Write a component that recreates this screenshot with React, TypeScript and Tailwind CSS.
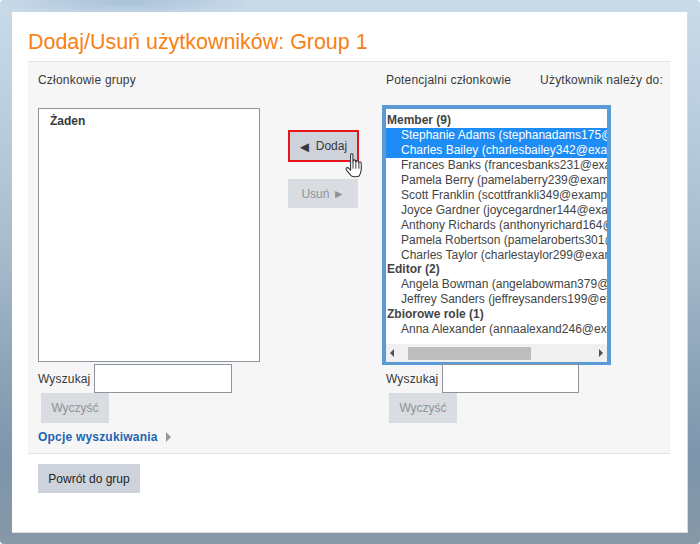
const members = [
  { label: "Member (9)", group: true },
  { label: "Stephanie Adams (stephanadams175@example.com)", selected: true },
  { label: "Charles Bailey (charlesbailey342@example.com)", selected: true },
  { label: "Frances Banks (francesbanks231@example.com)" },
  { label: "Pamela Berry (pamelaberry239@example.com)" },
  { label: "Scott Franklin (scottfrankli349@example.com)" },
  { label: "Joyce Gardner (joycegardner144@example.com)" },
  { label: "Anthony Richards (anthonyrichard164@example.com)" },
  { label: "Pamela Robertson (pamelaroberts301@example.com)" },
  { label: "Charles Taylor (charlestaylor299@example.com)" },
  { label: "Editor (2)", group: true },
  { label: "Angela Bowman (angelabowman379@example.com)" },
  { label: "Jeffrey Sanders (jeffreysanders199@example.com)" },
  { label: "Zbiorowe role (1)", group: true },
  { label: "Anna Alexander (annaalexand246@example.com)" },
];

function SearchBox({ width }: { width: string }) {
  return (
    <div>
      <div className="flex items-center h-[29px]">
        <span className="w-[56px] text-[12px] tracking-[0.15px] text-[#373a3c] pt-[1px]">Wyszukaj</span>
        <input type="text" className={`${width} h-[29px] bg-white border border-[#8f959e] outline-none`} />
      </div>
      <button className="block ml-[3px] w-[68px] h-[30px] bg-[#d9dce1] text-[12px] text-[#8f9296]">Wyczyść</button>
    </div>
  );
}

function Hand() {
  return (
    <svg width="19" height="25" viewBox="0.4 0.2 16.6 23.6" className="absolute left-[57px] top-[91px]">
      <path
        d="M5 1.8c0-1.1 2.2-1.1 2.2 0V9l.4-1.6c.3-1 2-1 2.1.2l.1 1.5.5-1.1c.4-.9 2-.7 2.1.4l.1 1.4.5-.7c.5-.7 1.9-.4 2 .6.2 2.500.4 5.500-.4 8.500-.4 1.500-.9 2.600-1.500 3.600-1 1.200-6.200 1.200-7.400 0L1.500 16.800c-1-1.300-.9-2.100-.4-2.500.7-.5 1.800-.1 2.500.7L5 16.500V1.800z"
        fill="#fff"
        stroke="#30343a"
        strokeWidth="1"
        strokeLinejoin="round"
      />
      <path d="M7.300 9v6M10 9.500v5.500M12.900 10v5" stroke="#30343a" strokeWidth="0.9" fill="none" />
    </svg>
  );
}

export default function App() {
  return (
    <div className="w-[700px] h-[544px] overflow-hidden bg-white font-['Liberation_Sans',Arial,sans-serif]">
      <div className="w-full h-full rounded-[4px] pt-[12px] pl-[12px] bg-[radial-gradient(ellipse_130px_14px_at_125px_2px,#a9c1d9,transparent),linear-gradient(180deg,#c9dae8_0%,#bccfdf_20%,#a9bccc_45%,#8aa1b6_70%,#7d95ab_85%,#8798a6_100%)]">
        <div className="w-[676px] h-[521px] bg-white border-r border-b border-[#dcdcdc] px-[16px]">
          <h1 className="h-[50px] pt-[18px] text-[21.45px] leading-[24px] text-[#f98012] border-b border-[#e3e3e3]">
            Dodaj/Usuń użytkowników: Group 1
          </h1>

          <div className="relative h-[392px] w-[642px] bg-[#f6f6f6] border-b border-[#e3e3e3] flex pl-[10px] overflow-hidden">
            <div className="w-[222px] pt-[9px]">
              <div className="text-[12px] leading-[18px] text-[#373a3c] tracking-[0.2px]">Członkowie grupy</div>
              <div className="mt-[19px] h-[254px] bg-white border border-[#8f959e] pl-[11px] pt-[5px] text-[12px] leading-[15px] font-bold text-[#373a3c]">
                Żaden
              </div>
              <div className="mt-[2px]">
                <SearchBox width="w-[138px]" />
              </div>
              <div className="mt-[6px] flex items-center gap-[8px] text-[12px] leading-[16px] font-bold text-[#1e64b4] tracking-[0.2px] whitespace-nowrap">
                Opcje wyszukiwania
                <span className="w-0 h-0 border-y-[5px] border-y-transparent border-l-[5px] border-l-[#999]" />
              </div>
            </div>

            <div className="relative w-[71px] ml-[28px] pt-[68px] shrink-0">
              <button className="flex items-center justify-center gap-[4px] pr-[3px] w-[71px] h-[32px] bg-[#ced3db] border-2 border-[#e8141c] text-[12px] text-[#373a3c]">
                <span className="text-[15px] leading-none">◄</span>
                <span>Dodaj</span>
              </button>
              <button className="block mt-[17px] w-[70px] h-[29px] bg-[#d9dce1] text-[12px] text-[#8f9296]">
                Usuń ►
              </button>
              <Hand />
            </div>

            <div className="ml-[23px] w-[281px] shrink-0 pt-[9px]">
              <div className="pl-[4px] flex text-[12px] leading-[18px] text-[#373a3c] tracking-[0.2px] whitespace-nowrap">
                <span className="w-[155px]">Potencjalni członkowie</span>
                <span>Użytkownik należy do:</span>
              </div>
              <div className="mt-[16px] w-[229px] h-[260px] border-4 border-b-[3px] border-[#5b9bd5] bg-white flex flex-col overflow-hidden">
                <div className="flex-1 overflow-hidden pt-[4px] text-[12px] leading-[14.9px] text-[#444]">
                  {members.map((m) =>
                    m.group ? (
                      <div key={m.label} className="pl-[1px] font-bold whitespace-nowrap">
                        {m.label}
                      </div>
                    ) : (
                      <div
                        key={m.label}
                        className={`pl-[15px] whitespace-nowrap ${m.selected ? "bg-[#1e8cf5] text-white" : ""}`}
                      >
                        <span className="relative top-[0.5px]">{m.label}</span>
                      </div>
                    )
                  )}
                </div>
                <div className="h-[18px] bg-[#f0f0f0] flex items-center shrink-0">
                  <span className="ml-[4px] w-0 h-0 border-y-[4px] border-y-transparent border-r-[4px] border-r-[#505050]" />
                  <div className="ml-[14px] w-[123px] h-[13px] bg-[#bdbdbd]" />
                  <span className="ml-auto mr-[4px] w-0 h-0 border-y-[4px] border-y-transparent border-l-[4px] border-l-[#505050]" />
                </div>
              </div>
              <div className="-mt-[1px] pl-[4px]">
                <SearchBox width="w-[137px]" />
              </div>
            </div>
          </div>

          <button className="block mt-[10px] ml-[10px] w-[102px] h-[29px] pt-[1px] bg-[#ced3db] text-[12px] text-[#212529]">
            Powrót do grup
          </button>
        </div>
      </div>
    </div>
  );
}
